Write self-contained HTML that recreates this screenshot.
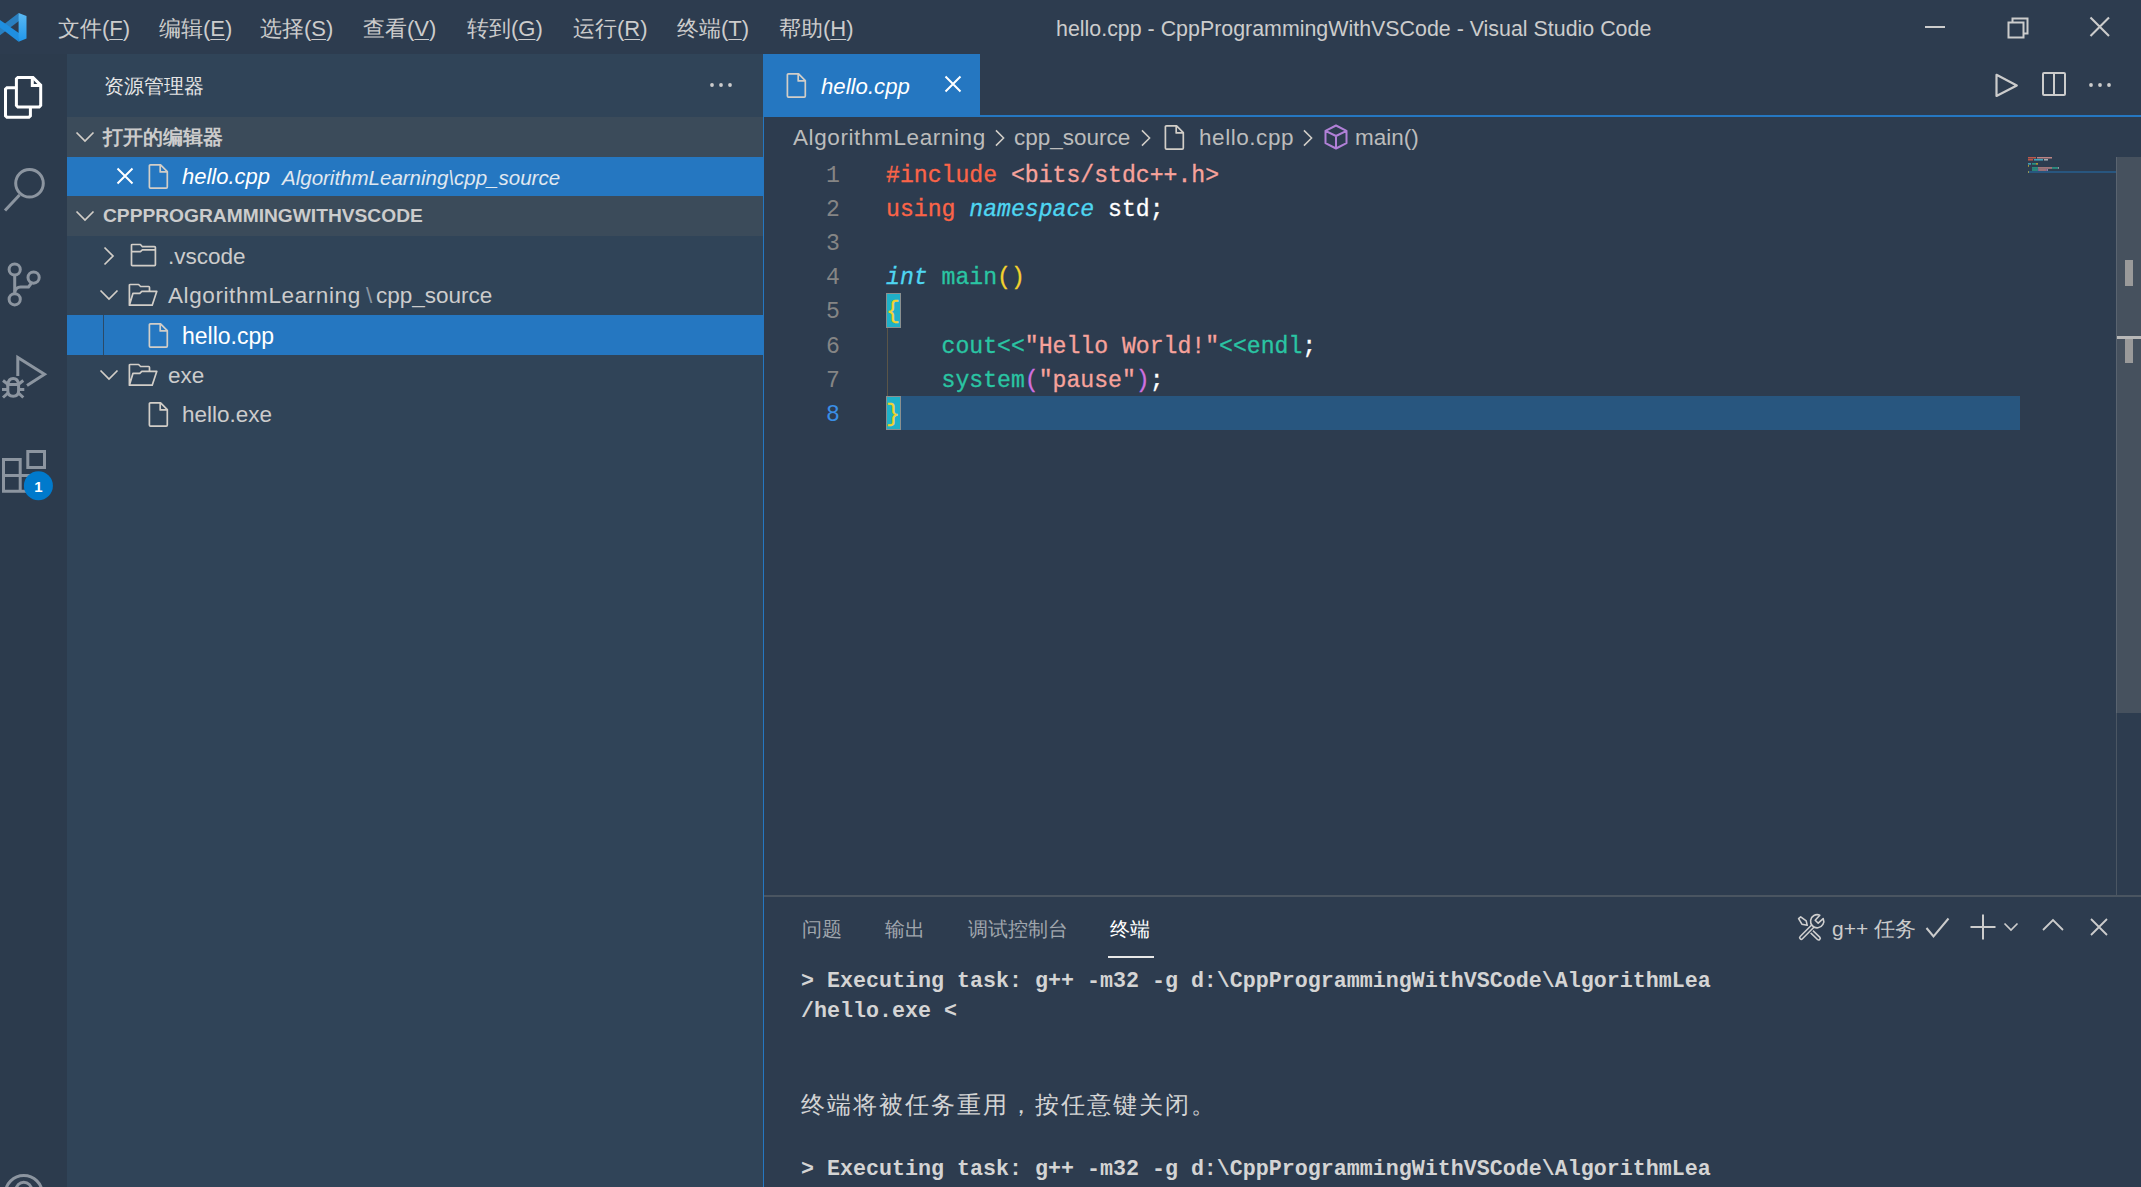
<!DOCTYPE html>
<html><head><meta charset="utf-8">
<style>
*{margin:0;padding:0;box-sizing:border-box}
html,body{width:2141px;height:1187px;overflow:hidden;background:#2d3c4f;font-family:"Liberation Sans",sans-serif;color:#cccccc}
.a{position:absolute;white-space:pre}
.c{display:inline-block;width:1em}
.tc{font-family:"Liberation Sans",sans-serif;font-weight:normal;font-size:24px}
.tc .c{width:26px}
svg{position:absolute;overflow:visible}
.menu{top:14px;font-size:22px;color:#cccccc;height:30px;line-height:30px}
.u{text-decoration:underline;text-underline-offset:3px;text-decoration-thickness:1px}
#activity{left:0;top:54px;width:67px;height:1133px;background:#2c3b4d}
#sidebar{left:67px;top:54px;width:696px;height:1133px;background:#304458}
.shdr{left:67px;width:696px;height:40px;background:#3b4b5a}
.sel{left:67px;width:696px;background:#2577c1}
.row{font-size:22px;line-height:40px;height:40px}
.code{font-family:"Liberation Mono",monospace;font-size:23.13px;line-height:34.14px;height:34.14px}
.ln{font-family:"Liberation Mono",monospace;font-size:23.13px;line-height:34.14px;color:#858585;text-align:right;width:60px;left:780px}
.term{font-family:"Liberation Mono",monospace;font-weight:bold;font-size:21.67px;line-height:30.85px;color:#d4d4d4;left:801px}
</style></head><body>

<!-- TITLE BAR -->
<div class="a" style="left:0;top:0;width:2141px;height:54px;background:#2d3c4f"></div>
<svg style="left:0;top:0" width="30" height="50" viewBox="0 0 30 50">
  <defs><linearGradient id="lg1" x1="0" y1="0" x2="0" y2="1"><stop offset="0" stop-color="#5bb9f2"/><stop offset="1" stop-color="#1f96ea"/></linearGradient></defs>
  <path d="M18.6 13 L0 27.2 V35.2 L19.6 20.6 Z" fill="#2a7fbf"/>
  <path d="M0 20 L19.6 33.6 L18.6 41.8 L0 27.5 Z" fill="#1f8fe0"/>
  <path d="M18.6 13 L26.5 16 V38.4 L18.6 41.8 Z" fill="url(#lg1)"/>
</svg>
<div class="a menu" style="left:58px"><span class="c">文</span><span class="c">件</span>(<span class="u">F</span>)</div>
<div class="a menu" style="left:159px"><span class="c">编</span><span class="c">辑</span>(<span class="u">E</span>)</div>
<div class="a menu" style="left:260px"><span class="c">选</span><span class="c">择</span>(<span class="u">S</span>)</div>
<div class="a menu" style="left:363px"><span class="c">查</span><span class="c">看</span>(<span class="u">V</span>)</div>
<div class="a menu" style="left:467px"><span class="c">转</span><span class="c">到</span>(<span class="u">G</span>)</div>
<div class="a menu" style="left:573px"><span class="c">运</span><span class="c">行</span>(<span class="u">R</span>)</div>
<div class="a menu" style="left:677px"><span class="c">终</span><span class="c">端</span>(<span class="u">T</span>)</div>
<div class="a menu" style="left:779px"><span class="c">帮</span><span class="c">助</span>(<span class="u">H</span>)</div>
<div class="a" style="left:1056px;top:14px;font-size:21.4px;line-height:30px;color:#cccccc">hello.cpp - CppProgrammingWithVSCode - Visual Studio Code</div>
<!-- window controls -->
<div class="a" style="left:1925px;top:26px;width:20px;height:2px;background:#cccccc"></div>
<svg style="left:2007px;top:16.5px" width="22" height="22" viewBox="0 0 22 22"><path d="M1.5 5.5 H16.5 V20.5 H1.5 Z M5.5 5.5 V1.5 H20.5 V16.5 H16.5" fill="none" stroke="#cccccc" stroke-width="2"/></svg>
<svg style="left:2089px;top:16px" width="22" height="22" viewBox="0 0 22 22"><path d="M1.5 1.5 L20 20 M20 1.5 L1.5 20" stroke="#cccccc" stroke-width="2.1"/></svg>

<!-- ACTIVITY BAR -->
<div class="a" id="activity"></div>
<div class="a" id="sidebar"></div>

<!-- activity icons -->
<svg style="left:0;top:0" width="67" height="1187" viewBox="0 0 67 1187">
 <g fill="none" stroke="#ffffff" stroke-width="3" stroke-linejoin="miter">
  <path d="M16.4 87.7 H7 L5.5 89.2 V115.8 L7 117.3 H28.9 L30.4 115.8 V107"/>
  <path d="M17.9 77.4 H33 L40.7 85.1 V105.5 L39.2 107 H17.9 L16.4 105.5 V78.9 Z"/>
  <path d="M32.3 77.4 V85.5 H40.7"/>
 </g>
 <g fill="none" stroke="#8c95a0" stroke-width="3">
  <circle cx="29.5" cy="183.3" r="13.8"/>
  <path d="M19.5 195 L5 210.5"/>
  <circle cx="14.7" cy="269.5" r="5.6"/>
  <circle cx="33.6" cy="277.6" r="5.6"/>
  <circle cx="14.7" cy="299.3" r="5.6"/>
  <path d="M14.7 275.1 V293.7"/>
  <path d="M31.5 283 L28.5 287 H20.5 Q16 287 14.7 292"/>
  <path d="M17.8 376 V357.5 L44.5 374.3 L27 385.5"/>
  <path d="M7.8 384.5 Q8.5 378.5 13.2 378.5 Q18 378.5 18.5 384.5 Z M7.8 384.5 V390.5 Q7.8 396.3 13.2 396.3 Q18.6 396.3 18.6 390.5 V384.5"/>
  <path d="M3 380.5 L7.5 384 M23.3 380.5 L18.8 384 M2 389.5 H7.8 M24.3 389.5 H18.6 M3 397.5 L8 393 M23.3 397.5 L18.5 393"/>
  <path d="M3.5 459.5 H20.2 V491.3 H3.5 Z M3.5 475.5 H37 V491.3 H20.2"/>
  <path d="M27.8 451.4 H44.5 V467.5 H27.8 Z"/>
  <circle cx="23.8" cy="1194" r="18.5"/>
  <circle cx="23.8" cy="1190" r="7.8"/>
 </g>
 <circle cx="38.4" cy="485.8" r="14.5" fill="#007acc"/>
</svg>
<div class="a" style="left:24px;top:476px;width:29px;text-align:center;font-size:15px;line-height:22px;font-weight:bold;color:#ffffff">1</div>

<!-- SIDEBAR -->
<div class="a" style="left:104px;top:71px;font-size:20px;line-height:30px;color:#e6e6e6"><span class="c">资</span><span class="c">源</span><span class="c">管</span><span class="c">理</span><span class="c">器</span></div>
<svg style="left:709px;top:81.5px" width="24" height="6" viewBox="0 0 24 6"><circle cx="3" cy="3" r="1.9" fill="#cccccc"/><circle cx="12" cy="3" r="1.9" fill="#cccccc"/><circle cx="21" cy="3" r="1.9" fill="#cccccc"/></svg>

<div class="a shdr" style="top:117px"></div>
<div class="a sel" style="top:157px;height:39px"></div>
<div class="a shdr" style="top:196px"></div>
<div class="a sel" style="top:315px;height:40px"></div>


<svg width="0" height="0" style="position:absolute">
 <defs>
  <symbol id="i-file" viewBox="0 0 21 27"><path d="M1.4 3 Q1.4 1.9 2.5 1.9 H12.6 L19.3 8.6 V24 Q19.3 25.1 18.2 25.1 H2.5 Q1.4 25.1 1.4 24 Z M12.2 2 V8.9 H19.3" fill="none" stroke="#d2cec8" stroke-width="1.7" stroke-linejoin="round"/></symbol>
  <symbol id="i-folder" viewBox="0 0 27 24"><path d="M1.5 2.4 Q1.5 1.5 2.4 1.5 H10.4 L12.4 3.7 H24.5 Q25.4 3.7 25.4 4.6 V21.8 Q25.4 22.7 24.5 22.7 H2.4 Q1.5 22.7 1.5 21.8 Z M1.5 8.6 H10.4 L12.4 6.8 H25.4" fill="none" stroke="#d2cec8" stroke-width="1.7" stroke-linejoin="round"/></symbol>
  <symbol id="i-ofolder" viewBox="0 0 30 24"><path d="M1.4 22.2 V2.4 Q1.4 1.5 2.3 1.5 H10.6 L12.6 3.5 H20.6 Q21.5 3.5 21.5 4.4 V8.3 M1.4 22.2 L5 10.3 H11.8 L13.8 8.3 H28.8 L24.2 22.2 Z" fill="none" stroke="#d2cec8" stroke-width="1.7" stroke-linejoin="round"/></symbol>
  <symbol id="i-chev-r" viewBox="0 0 12 20"><path d="M1.5 1.5 L10 10 L1.5 18.5" fill="none" stroke="#d2cec8" stroke-width="1.7"/></symbol>
  <symbol id="i-chev-d" viewBox="0 0 20 12"><path d="M1.5 1.5 L10 10 L18.5 1.5" fill="none" stroke="#d2cec8" stroke-width="1.7"/></symbol>
 </defs>
</svg>
<!-- open editors header -->
<svg style="left:75px;top:131px" width="20" height="12"><use href="#i-chev-d"/></svg>
<div class="a" style="left:103px;top:124px;font-size:20px;line-height:26px;font-weight:bold;color:#cccccc"><span class="c">打</span><span class="c">开</span><span class="c">的</span><span class="c">编</span><span class="c">辑</span><span class="c">器</span></div>
<!-- open editor row -->
<svg style="left:116px;top:167px" width="18" height="18" viewBox="0 0 18 18"><path d="M1.5 1.5 L16.5 16.5 M16.5 1.5 L1.5 16.5" stroke="#ffffff" stroke-width="2"/></svg>
<svg style="left:148px;top:163px" width="21" height="27"><use href="#i-file"/></svg>
<div class="a" style="left:182px;top:162px;font-size:22px;line-height:30px;font-style:italic;color:#ffffff">hello.cpp</div>
<div class="a" style="left:282px;top:163px;font-size:20.5px;line-height:30px;font-style:italic;color:#e0e8f0">AlgorithmLearning\cpp_source</div>
<!-- workspace header -->
<svg style="left:75px;top:210px" width="20" height="12"><use href="#i-chev-d"/></svg>
<div class="a" style="left:103px;top:203px;font-size:19.2px;line-height:26px;font-weight:bold;color:#cccccc">CPPPROGRAMMINGWITHVSCODE</div>
<!-- tree -->
<svg style="left:103px;top:246px" width="12" height="20"><use href="#i-chev-r"/></svg>
<svg style="left:130px;top:243px" width="27" height="24"><use href="#i-folder"/></svg>
<div class="a" style="left:168px;top:242px;font-size:22.5px;line-height:30px">.vscode</div>

<svg style="left:99px;top:289px" width="20" height="12"><use href="#i-chev-d"/></svg>
<svg style="left:128px;top:283px" width="30" height="24"><use href="#i-ofolder"/></svg>
<div class="a" style="left:168px;top:281px;font-size:22.5px;line-height:30px;letter-spacing:0.6px">AlgorithmLearning</div><div class="a" style="left:366px;top:281px;font-size:22.5px;line-height:30px;color:#8a96a3">\</div><div class="a" style="left:376px;top:281px;font-size:22.5px;line-height:30px">cpp_source</div>

<div class="a" style="left:103px;top:315px;width:1px;height:40px;background:#2b4a68"></div>
<svg style="left:148px;top:322px" width="21" height="27"><use href="#i-file"/></svg>
<div class="a" style="left:182px;top:321px;font-size:23px;line-height:30px;color:#ffffff">hello.cpp</div>

<svg style="left:99px;top:369px" width="20" height="12"><use href="#i-chev-d"/></svg>
<svg style="left:128px;top:363px" width="30" height="24"><use href="#i-ofolder"/></svg>
<div class="a" style="left:168px;top:361px;font-size:22.5px;line-height:30px">exe</div>

<svg style="left:148px;top:401px" width="21" height="27"><use href="#i-file"/></svg>
<div class="a" style="left:182px;top:400px;font-size:22.5px;line-height:30px">hello.exe</div>

<!-- EDITOR -->
<div class="a" style="left:763px;top:54px;width:217px;height:63px;background:#2577c1"></div>
<div class="a" style="left:763px;top:115px;width:1378px;height:2px;background:#2577c1"></div>
<div class="a" style="left:763px;top:117px;width:1px;height:1070px;background:#2577c1"></div>
<svg style="left:786px;top:72px" width="21" height="27"><use href="#i-file"/></svg>
<div class="a" style="left:821px;top:72px;font-size:22.2px;line-height:30px;font-style:italic;color:#ffffff">hello.cpp</div>
<svg style="left:944px;top:75px" width="18" height="18" viewBox="0 0 18 18"><path d="M1.5 1.5 L16.5 16.5 M16.5 1.5 L1.5 16.5" stroke="#ffffff" stroke-width="2"/></svg>
<!-- editor actions -->
<svg style="left:1993px;top:71px" width="28" height="30" viewBox="0 0 28 30"><path d="M3.5 3.8 V25 L23.8 14.4 Z" fill="none" stroke="#cccccc" stroke-width="2.2" stroke-linejoin="round"/></svg>
<svg style="left:2041px;top:71px" width="26" height="26" viewBox="0 0 26 26"><path d="M2 3 Q2 2 3 2 H23 Q24 2 24 3 V23 Q24 24 23 24 H3 Q2 24 2 23 Z M13 2 V24" fill="none" stroke="#cccccc" stroke-width="2"/></svg>
<svg style="left:2088px;top:81.5px" width="24" height="6" viewBox="0 0 24 6"><circle cx="3" cy="3" r="1.9" fill="#cccccc"/><circle cx="12" cy="3" r="1.9" fill="#cccccc"/><circle cx="21" cy="3" r="1.9" fill="#cccccc"/></svg>

<!-- breadcrumbs -->
<div class="a" style="left:793px;top:123px;font-size:22.5px;line-height:30px;color:#bcbcbc"><span style="letter-spacing:0.6px">AlgorithmLearning</span></div>
<svg style="left:994px;top:129px" width="12" height="18"><use href="#i-chev-r" style="--c:#bcbcbc"/></svg>
<div class="a" style="left:1014px;top:123px;font-size:22.5px;line-height:30px;color:#bcbcbc">cpp_source</div>
<svg style="left:1140px;top:129px" width="12" height="18"><use href="#i-chev-r"/></svg>
<svg style="left:1164px;top:124px" width="21" height="27"><use href="#i-file"/></svg>
<div class="a" style="left:1199px;top:123px;font-size:22.5px;line-height:30px;color:#bcbcbc;letter-spacing:0.55px">hello.cpp</div>
<svg style="left:1302px;top:129px" width="12" height="18"><use href="#i-chev-r"/></svg>
<svg style="left:1324px;top:124px" width="24" height="26" viewBox="0 0 24 26"><path d="M12 1.5 L22.5 6.8 V19.2 L12 24.5 L1.5 19.2 V6.8 Z M1.5 6.8 L12 12 L22.5 6.8 M12 12 V24.5" fill="none" stroke="#b180d7" stroke-width="2" stroke-linejoin="round"/></svg>
<div class="a" style="left:1355px;top:123px;font-size:22.5px;line-height:30px;color:#bcbcbc">main()</div>

<!-- current line highlight + brackets -->
<div class="a" style="left:886px;top:396px;width:1134px;height:34px;background:#28567f"></div>
<div class="a" style="left:887px;top:328px;width:1px;height:68px;background:#5a5548"></div>
<div class="a" style="left:886px;top:293px;width:15px;height:35px;background:#1fb0c8;border:1px solid #8a9090"></div>
<div class="a" style="left:886px;top:396px;width:15px;height:34px;background:#1fb0c8;border:1px solid #8a9090"></div>

<!-- line numbers -->
<div class="a ln" style="top:158.8px;height:300px">1
2
3
4
5
6
7
<span style="color:#3a8ee6">8</span></div>

<!-- code -->
<div class="a" style="left:886px;top:158.8px;font-family:'Liberation Mono',monospace;font-size:23.13px;line-height:34.14px;color:#ffffff;-webkit-text-stroke:0.3px currentColor"><span style="color:#fb6448">#include</span> <span style="color:#f7a39c">&lt;bits/stdc++.h&gt;</span>
<span style="color:#fb6448">using</span> <i style="color:#4fd6f2">namespace</i> std;

<i style="color:#4fd6f2">int</i> <span style="color:#2ac5a3">main</span><span style="color:#f2d22e">()</span>
<span style="color:#f2d22e">{</span>
    <span style="color:#2ac5a3">cout&lt;&lt;</span><span style="color:#f7a39c">"Hello World!"</span><span style="color:#2ac5a3">&lt;&lt;endl</span>;
    <span style="color:#2ac5a3">system</span><span style="color:#d070e0">(</span><span style="color:#f7a39c">"pause"</span><span style="color:#d070e0">)</span>;
<span style="color:#f2d22e">}</span></div>

<!-- minimap -->
<div class="a" style="left:2028px;top:171px;width:88px;height:2px;background:#28567f"></div>
<svg style="left:2028px;top:156.9px;opacity:0.7" width="40" height="18" viewBox="0 0 40 18"><rect x="0" y="0.00" width="8" height="1.5" fill="#fb6448"/><rect x="9" y="0.00" width="15" height="1.5" fill="#f7a39c"/><rect x="0" y="2.04" width="5" height="1.5" fill="#fb6448"/><rect x="6" y="2.04" width="9" height="1.5" fill="#4fd6f2"/><rect x="16" y="2.04" width="4" height="1.5" fill="#dddddd"/><rect x="0" y="6.12" width="3" height="1.5" fill="#4fd6f2"/><rect x="4" y="6.12" width="4" height="1.5" fill="#2ac5a3"/><rect x="8" y="6.12" width="2" height="1.5" fill="#f2d22e"/><rect x="0" y="8.16" width="1" height="1.5" fill="#f2d22e"/><rect x="4" y="10.20" width="6" height="1.5" fill="#2ac5a3"/><rect x="10" y="10.20" width="14" height="1.5" fill="#f7a39c"/><rect x="24" y="10.20" width="6" height="1.5" fill="#2ac5a3"/><rect x="30" y="10.20" width="1" height="1.5" fill="#dddddd"/><rect x="4" y="12.24" width="6" height="1.5" fill="#2ac5a3"/><rect x="10" y="12.24" width="1" height="1.5" fill="#d070e0"/><rect x="11" y="12.24" width="7" height="1.5" fill="#f7a39c"/><rect x="18" y="12.24" width="1" height="1.5" fill="#d070e0"/><rect x="19" y="12.24" width="1" height="1.5" fill="#dddddd"/><rect x="0" y="14.28" width="1" height="1.5" fill="#f2d22e"/></svg>
<!-- scrollbar -->
<div class="a" style="left:2116px;top:157px;width:25px;height:556px;background:#46515e"></div>
<div class="a" style="left:2116px;top:157px;width:1px;height:738px;background:#4b5663"></div>
<div class="a" style="left:2116px;top:157px;width:1px;height:556px;background:#5a6470"></div>
<div class="a" style="left:2125px;top:260px;width:8px;height:26px;background:#9a9a9a"></div>
<div class="a" style="left:2117px;top:336px;width:24px;height:3px;background:#b8b8b8"></div>
<div class="a" style="left:2125px;top:339px;width:8px;height:24px;background:#9a9a9a"></div>

<!-- PANEL -->
<div class="a" style="left:764px;top:895px;width:1377px;height:2px;background:#4a5561"></div>
<div class="a" style="left:802px;top:914px;font-size:20px;line-height:30px;color:#a0a6ad"><span class="c">问</span><span class="c">题</span></div>
<div class="a" style="left:885px;top:914px;font-size:20px;line-height:30px;color:#a0a6ad"><span class="c">输</span><span class="c">出</span></div>
<div class="a" style="left:968px;top:914px;font-size:20px;line-height:30px;color:#a0a6ad"><span class="c">调</span><span class="c">试</span><span class="c">控</span><span class="c">制</span><span class="c">台</span></div>
<div class="a" style="left:1110px;top:914px;font-size:20px;line-height:30px;color:#ffffff"><span class="c">终</span><span class="c">端</span></div>
<div class="a" style="left:1108px;top:956px;width:46px;height:1.5px;background:#e8e8e8"></div>

<!-- panel actions -->
<svg style="left:1790px;top:905px" width="40" height="45" viewBox="0 0 40 45">
 <path d="M21.5 26.5 L28.6 33.3" stroke="#cfcfcf" stroke-width="4.8" stroke-linecap="round"/>
 <path d="M20.5 25.5 L28.6 33.3" stroke="#2d3c4f" stroke-width="1.6" stroke-linecap="round"/>
 <path d="M11.3 32.6 L23.5 20.4" stroke="#2d3c4f" stroke-width="6.5" stroke-linecap="round"/>
 <path d="M11.3 32.6 L23.5 20.4" stroke="#cfcfcf" stroke-width="4.8" stroke-linecap="round"/>
 <path d="M11.3 32.6 L24.5 19.4" stroke="#2d3c4f" stroke-width="1.6" stroke-linecap="round"/>
 <path d="M29.8 10.2 L25.2 15.2 L28.2 18.2 L33.2 13.6 A6.6 6.6 0 1 1 29.8 10.2 Z" fill="#2d3c4f" stroke="#cfcfcf" stroke-width="1.6" stroke-linejoin="round"/>
 <path d="M8.6 13.6 L10.7 11.8 L16.2 15.8 L17.2 20.3 L11.9 19.2 Z" fill="none" stroke="#cfcfcf" stroke-width="1.6" stroke-linejoin="round"/>
</svg>
<div class="a" style="left:1832px;top:914px;font-size:21px;line-height:30px;color:#cccccc">g++ <span class="c">任</span><span class="c">务</span></div>
<svg style="left:1925px;top:916px" width="26" height="24" viewBox="0 0 26 24"><path d="M1.5 12 L8.5 20.5 L23.5 2.5" fill="none" stroke="#cccccc" stroke-width="2"/></svg>
<svg style="left:1969px;top:913px" width="28" height="28" viewBox="0 0 28 28"><path d="M14 1.5 V26.5 M1.5 14 H26.5" stroke="#cccccc" stroke-width="2"/></svg>
<svg style="left:2003px;top:922px" width="16" height="10" viewBox="0 0 16 10"><path d="M1.5 1.5 L8 8 L14.5 1.5" fill="none" stroke="#cccccc" stroke-width="1.7"/></svg>
<svg style="left:2041px;top:917px" width="24" height="16" viewBox="0 0 24 16"><path d="M2 13 L12 3 L22 13" fill="none" stroke="#cccccc" stroke-width="1.8"/></svg>
<svg style="left:2089px;top:917px" width="20" height="20" viewBox="0 0 20 20"><path d="M2 2 L18 18 M18 2 L2 18" stroke="#cccccc" stroke-width="1.8"/></svg>

<!-- terminal -->
<div class="a term" style="top:966.6px">&gt; Executing task: g++ -m32 -g d:\CppProgrammingWithVSCode\AlgorithmLea
/hello.exe &lt;


<span class="tc"><span class="c">终</span><span class="c">端</span><span class="c">将</span><span class="c">被</span><span class="c">任</span><span class="c">务</span><span class="c">重</span><span class="c">用</span><span class="c">，</span><span class="c">按</span><span class="c">任</span><span class="c">意</span><span class="c">键</span><span class="c">关</span><span class="c">闭</span><span class="c">。</span></span>

&gt; Executing task: g++ -m32 -g d:\CppProgrammingWithVSCode\AlgorithmLea</div>

</body></html>
